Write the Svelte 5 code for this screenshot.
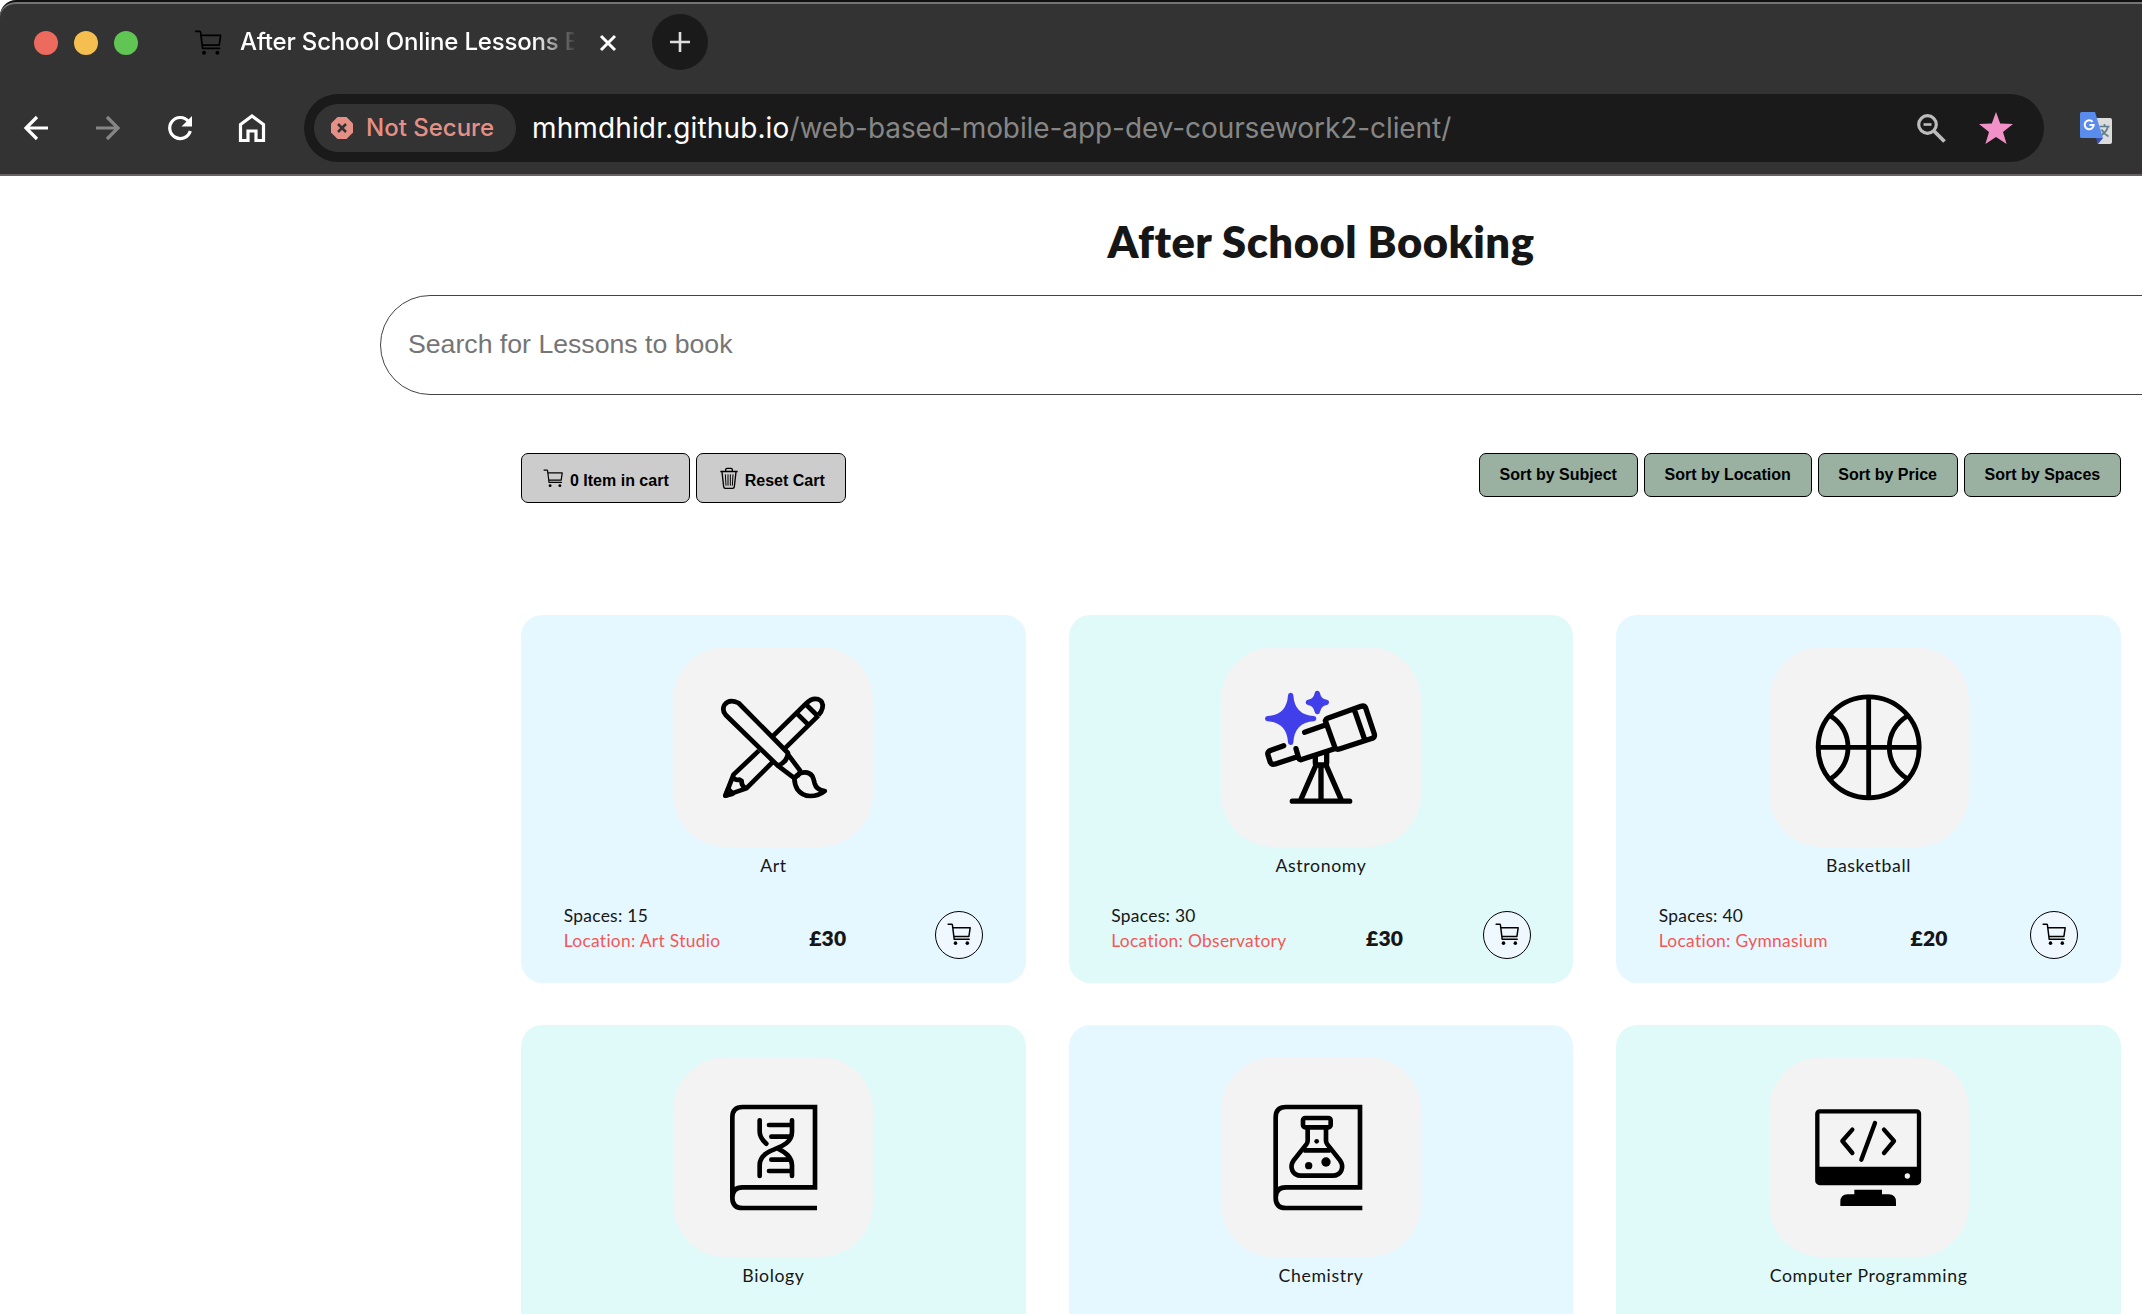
<script>
  const lessons = [
    { name: 'Art', spaces: 15, location: 'Art Studio', price: 30, icon: 'art', tone: 'sky' },
    { name: 'Astronomy', spaces: 30, location: 'Observatory', price: 30, icon: 'astronomy', tone: 'mint' },
    { name: 'Basketball', spaces: 40, location: 'Gymnasium', price: 20, icon: 'basketball', tone: 'sky' },
    { name: 'Biology', icon: 'biology', tone: 'mint' },
    { name: 'Chemistry', icon: 'chemistry', tone: 'sky' },
    { name: 'Computer Programming', icon: 'programming', tone: 'mint' }
  ];
  const sorts = ['Subject', 'Location', 'Price', 'Spaces'];
</script>

{#snippet cart()}
  <svg class="cart" viewBox="1291 971 74 72" fill="none" stroke="currentColor" stroke-width="4.600" stroke-linejoin="round" stroke-linecap="round">
    <path d="M1294 975h11q2 0 2.500 2.500L1313 1022h47M1308 986h55l-4 27h-47" />
    <circle cx="1317" cy="1034" r="5.500" fill="currentColor" stroke="none" />
    <circle cx="1354" cy="1034" r="5.500" fill="currentColor" stroke="none" />
  </svg>
{/snippet}

<div class="window">
  <header class="chrome">
    <div class="tabs">
      <div class="lights"><i class="red"></i><i class="amber"></i><i class="green"></i></div>
      <div class="tab">
        {@render cart()}
        <span class="tab-title">After School Online Lessons Booking</span>
        <svg class="close" viewBox="0 0 18 18" stroke="#fff" stroke-width="3"><path d="M2 2l14 14M16 2L2 16" /></svg>
      </div>
      <div class="plus"><svg viewBox="0 0 20 20" stroke="#dedede" stroke-width="2.600"><path d="M10 0v20M0 10h20" /></svg></div>
    </div>
    <div class="toolbar">
      <div class="nav">
        <svg viewBox="0 0 24 24" fill="none" stroke="#fff" stroke-width="3.200"><path d="M24 12H2M13 1L2 12l11 11" /></svg>
        <svg viewBox="0 0 24 24" fill="none" stroke="#858585" stroke-width="3.200"><path d="M0 12h22M11 1l11 11-11 11" /></svg>
        <svg viewBox="0 0 24 24" fill="none" stroke="#fff" stroke-width="3.200"><path d="M20.500 5.500A10.500 10.500 0 1 0 22.300 15" /><path d="M24 0v10.500H13.500z" fill="#fff" stroke="none" /></svg>
        <svg class="home" viewBox="0 0 26 28" fill="none" stroke="#fff" stroke-width="3.200"><path d="M1.500 26.500V10.500L13 2l11.500 8.500v16H17v-9.500H9v9.500z" /></svg>
      </div>
      <div class="omnibox">
        <div class="chip">
          <svg viewBox="0 0 22 22"><path d="M6.500 0h9L22 6.500v9L15.500 22h-9L0 15.500v-9z" fill="#e59086" /><path d="M7 7l8 8M15 7l-8 8" stroke="#333" stroke-width="2.600" /></svg>
          <span>Not Secure</span>
        </div>
        <span class="url"><span class="host">mhmdhidr.github.io</span><span class="path">/web-based-mobile-app-dev-coursework2-client/</span></span>
        <svg class="lens" viewBox="0 0 29 29" fill="none" stroke="#bcbcbc"><circle cx="10.500" cy="10.500" r="8.800" stroke-width="3.200" /><path d="M17 17l10.500 10.500" stroke-width="3.800" /><path d="M6.500 10.500h8" stroke-width="2.600" /></svg>
        <svg class="star" viewBox="0 0 34 32"><path d="M17 0l4.200 11.500L34 12l-10 8 3.600 12L17 25 6.400 32 10 20 0 12l12.800-.5z" fill="#f191c8" /></svg>
      </div>
      <svg class="translate" viewBox="0 0 32 32">
        <path d="M13 6h17q2 0 2 2v22q0 2-2 2H18z" fill="#dcdcdc" />
        <path d="M19.500 14.500h10M24.500 12v2.500M28 14.500q-1.500 6-8 9.500M21.500 17.500q2 4 7 7" fill="none" stroke="#607d8b" stroke-width="1.700" />
        <path d="M16 26h7l-5 6z" fill="#3450b4" />
        <path d="M1.500 0H15l8 26H1.500Q0 26 0 24.500v-23Q0 0 1.500 0z" fill="#5a8cee" />
        <path d="M12.600 9.800A4.500 4.500 0 1 0 13.700 13H9.500" fill="none" stroke="#fff" stroke-width="2" />
      </svg>
    </div>
  </header>

  <main>
    <h1>After School Booking</h1>
    <div class="search">Search for Lessons to book</div>

    <div class="actions">
      <div class="group">
        <button class="grey">{@render cart()}<span>0 Item in cart</span></button>
        <button class="grey reset">
          <svg class="trash" viewBox="1080 560 54 66" fill="none" stroke="#000" stroke-width="4">
            <path d="M1081 573.500h52M1097 573v-5q0-4 4-4h12q4 0 4 4v5M1086 575l5 44q.5 5 5 5h22q4.500 0 5-5l5-44" />
            <path d="M1096 582l2 34M1104 582v34M1111 582v34M1119 582l-2 34" stroke-width="3" />
          </svg><span>Reset Cart</span>
        </button>
      </div>
      <div class="group">
        {#each sorts as s}<button class="green-btn">Sort by {s}</button>{/each}
      </div>
    </div>

    <section class="grid">
      {#each lessons as l}
        <article class={l.tone}>
          <div class="tile">
            {#if l.icon === 'art'}
              <svg viewBox="482 141 591.600 600" preserveAspectRatio="none" fill="none" stroke="#000" stroke-width="14" stroke-linejoin="round">
                <path d="M776 410L876 310M810 448L912 347M876 310q18-18 36-12 16 6 12 26-2 10-12 22M848 340l34 34M874 312l36 36" />
                <path d="M736 452L661 524 637 587 699 565 776 487M661 533q4 8 18 6l6 4q-1 14 10 21" />
                <path d="M637 587l8-20 14 14z" fill="#000" />
                <path d="M676 309L822 459q-2 28-30 38L638 345q-12-14-4-30 14-20 42-6z" />
                <path d="M822 463L858 512Q856 530 838 532L792 497" />
                <path d="M858 520q24-8 36 8 4 8 7 22 5 20 30 23-18 15-43 15-24 0-38-20-8-12-9-32 6-12 17-16z" />
              </svg>
            {:else if l.icon === 'astronomy'}
              <svg viewBox="63 51 600 600" fill="none" stroke="#000" stroke-width="16" stroke-linejoin="round" stroke-linecap="round">
                <path d="M272 196Q276 262 341 266 276 270 272 337 268 270 203 266 268 262 272 196zM352 190Q356 213 379 217 356 221 352 245 348 221 325 217 348 213 352 190z" fill="#403fea" stroke="#403fea" />
                <path d="M376 272q2-5 7-7L483 229q10-3 14 5l26 78q2 9-6 13L418 357q-9 3-13-4zM465 245l27 78M314 307l62-22M288 356l8 28q3 7 11 4l92-30M251 347l-38 14q-12 5-9 14l7 22q4 8 15 5l66-22" />
                <path d="M346 378v20q0 7 7 7h20q7 0 7-7v-28M348 405l-46 105M378 405l46 105M363 408v104M277 513.500h172" />
              </svg>
            {:else if l.icon === 'basketball'}
              <svg viewBox="-34 -39 600 600" fill="none" stroke="#000" stroke-width="14.500">
                <circle cx="265" cy="262" r="151.500" />
                <path d="M265 110v304M113 262h304M150 167q53 35 53 95t-53 95M382 167q-55 35-55 95t55 95" />
              </svg>
            {:else if l.icon === 'programming'}
              <svg viewBox="28 -9 600 600" fill="none" stroke="#000" stroke-width="13" stroke-linecap="round" stroke-linejoin="round">
                <rect x="173" y="154" width="305" height="215" rx="7" />
                <path d="M173 320h305v49H173zM284 389h83v14h20q22 0 22 23v12H242v-12q0-23 22-23h20z" fill="#000" stroke="none" />
                <path d="M278 209l-30 34 30 36M373 209l30 34-30 36M346 189l-41 110" />
                <circle cx="443" cy="348" r="8" fill="#f3f3f3" stroke="none" />
              </svg>
            {:else}
              <svg viewBox={l.icon === 'biology' ? '-51 -9 600 600' : '-58 -9 600 600'} fill="none" stroke="#000" stroke-width="14">
                {#if l.icon === 'biology'}
                  <path d="M381 444H158q-31 0-31-31V172q0-31 31-31h217v241H158q-31 0-31 31" />
                  <path d="M209 181v34q0 18 20 36M306 181v34c0 32-30 44-48 51s-49 18-49 50v32M264 266q42 20 42 50v32M237 195h68M244 230h54M244 299h54M237 333h68" stroke-linecap="round" />
                {:else}
                  <path d="M366 444H137q-31 0-31-31V172q0-31 31-31h222v241H137q-31 0-31 31" />
                  <rect x="188" y="174" width="83" height="28" rx="7" />
                  <path d="M202 206v36q0 6-4 11l-38 48c-14 20-4 46 22 46h95c26 0 36-26 22-46l-38-48q-4-5-4-11v-36M190 271h80" />
                  <g fill="#000" stroke="none"><circle cx="229" cy="244" r="7" /><circle cx="205" cy="317" r="11" /><circle cx="257" cy="306" r="14" /></g>
                {/if}
              </svg>
            {/if}
          </div>
          <h2>{l.name}</h2>
          {#if l.location}
            <div class="info">
              <div class="meta"><span>Spaces: {l.spaces}</span><span class="loc">Location: {l.location}</span></div>
              <strong>£{l.price}</strong>
              <button class="add" aria-label="Add to cart">{@render cart()}</button>
            </div>
          {/if}
        </article>
      {/each}
    </section>
  </main>
</div>

<style>
  :global(body) { background: #fff; }
  .window { width: 2142px; height: 1314px; overflow: hidden; background: #fff; }
  svg { display: block; flex: none; overflow: visible; }
  button { font: inherit; color: #000; padding: 0; margin: 0; }

  .chrome { box-sizing: border-box; height: 176px; background: #333; border-top: 2px solid #101010; border-bottom: 2px solid #656263; font-family: Inter, sans-serif; box-shadow: inset 0 2px 0 #737373; border-radius: 16px 0 0 0; }
  .tabs { display: flex; align-items: center; height: 81px; padding-left: 34px; }
  .lights { display: flex; gap: 16px; }
  .lights i { width: 24px; height: 24px; border-radius: 50%; }
  .red { background: #ed6a5e; }
  .amber { background: #f5bf4f; }
  .green { background: #61c554; }
  .tab { display: flex; align-items: center; margin-left: 56px; width: 458px; color: #000; }
  .tab .cart { width: 28px; height: 26px; }
  .tab-title { width: 334px; margin: -1px 0 0 18px; font-size: 24px; font-weight: 500; line-height: 32px; letter-spacing: -0.180px; white-space: nowrap; overflow: hidden; color: #fff; -webkit-mask-image: linear-gradient(90deg, #000 88%, transparent 101%); mask-image: linear-gradient(90deg, #000 88%, transparent 101%); }
  .close { width: 18px; height: 18px; margin-left: 25px; }
  .plus { display: grid; place-items: center; width: 56px; height: 56px; margin-top: -1px; border-radius: 50%; background: #1a1a1a; }
  .plus svg { width: 20px; height: 20px; }
  .toolbar { display: flex; align-items: center; height: 68px; margin-top: 11px; padding-left: 24px; }
  .nav { display: flex; align-items: center; gap: 48px; width: 280px; }
  .nav svg { width: 24px; height: 24px; }
  .nav .home { width: 26px; height: 28px; margin-left: -1px; }
  .omnibox { box-sizing: border-box; display: flex; align-items: center; width: 1740px; height: 68px; padding: 0 31px 0 10px; border-radius: 34px; background: #1a1a1a; }
  .chip { box-sizing: border-box; display: flex; align-items: center; gap: 13px; width: 202px; height: 48px; padding-left: 17px; border-radius: 24px; background: #333; color: #e59086; font-size: 24px; font-weight: 500; white-space: nowrap; }
  .chip svg { width: 22px; height: 22px; }
  .chip span { margin-top: -2px; }
  .url { flex: 1; margin-left: 16px; font-size: 28px; color: #fff; white-space: nowrap; }
  .host { letter-spacing: 0.130px; }
  .path { color: #868686; letter-spacing: -0.080px; }
  .lens { width: 29px; height: 29px; }
  .star { width: 34px; height: 32px; margin-left: 33px; }
  .translate { width: 32px; height: 32px; margin-left: 36px; }

  main { display: flex; flex-direction: column; align-items: center; width: 2642px; font-family: Lato, sans-serif; color: #161616; }
  h1 { margin: 37px 0 0; font-size: 43.500px; line-height: 56px; font-weight: 800; letter-spacing: 0.500px; }
  .search { box-sizing: border-box; width: 1882px; height: 100px; margin-top: 26px; padding-left: 27px; border: 1px solid #444; border-radius: 50px; font: 26.670px/96px 'Liberation Sans', sans-serif; color: #757575; }
  .actions { display: flex; justify-content: space-between; align-items: flex-start; width: 1600px; margin-top: 58px; }
  .group { display: flex; gap: 6px; }
  .group button { box-sizing: border-box; display: flex; align-items: center; justify-content: center; border: 1px solid #000; border-radius: 7px; font: 700 16px 'Liberation Sans', sans-serif; white-space: nowrap; }
  .grey { height: 50px; padding: 5px 20px 0 21px; gap: 7px; background: #ccc; }
  .reset { padding: 5px 20px 0 23px; }
  .grey .cart { width: 20px; height: 19px; margin-top: -5px; }
  .grey span { margin-top: 1px; }
  .trash { width: 18px; height: 22px; margin-top: -6px; }
  .green-btn { height: 44px; padding: 0 19.800px; background: #9ab0a0; }
  .grid { display: grid; grid-template-columns: repeat(3, 1fr); gap: 42.670px; width: 1600px; margin-top: 111.700px; }
  article { box-sizing: border-box; display: flex; flex-direction: column; align-items: center; height: 368px; padding: 32px 42.670px 0; border-radius: 21.330px; }
  .sky { background: #e5f7ff; }
  .mint { background: #e0f9f9; }
  .tile { width: 200px; height: 200px; border-radius: 53px; background: #f3f3f3; }
  .tile svg { width: 200px; height: 200px; }
  h2 { margin: 7px 0 0; font-size: 17.700px; line-height: 24px; font-weight: 400; letter-spacing: 0.620px; }
  .info { display: flex; align-items: center; justify-content: space-between; width: 100%; height: 50px; margin-top: 25px; }
  .meta { display: flex; flex-direction: column; font-size: 17.400px; line-height: 25px; letter-spacing: 0.300px; }
  .loc { color: #f55656; }
  strong { margin-top: 19px; font-size: 21px; font-weight: 800; letter-spacing: 0.200px; }
  .add { box-sizing: border-box; display: grid; place-items: center; width: 48px; height: 48px; margin-top: 14px; border: 1.300px solid #000; border-radius: 50%; background: #f0f8ff; }
  .add .cart { width: 24px; height: 23px; }
</style>
